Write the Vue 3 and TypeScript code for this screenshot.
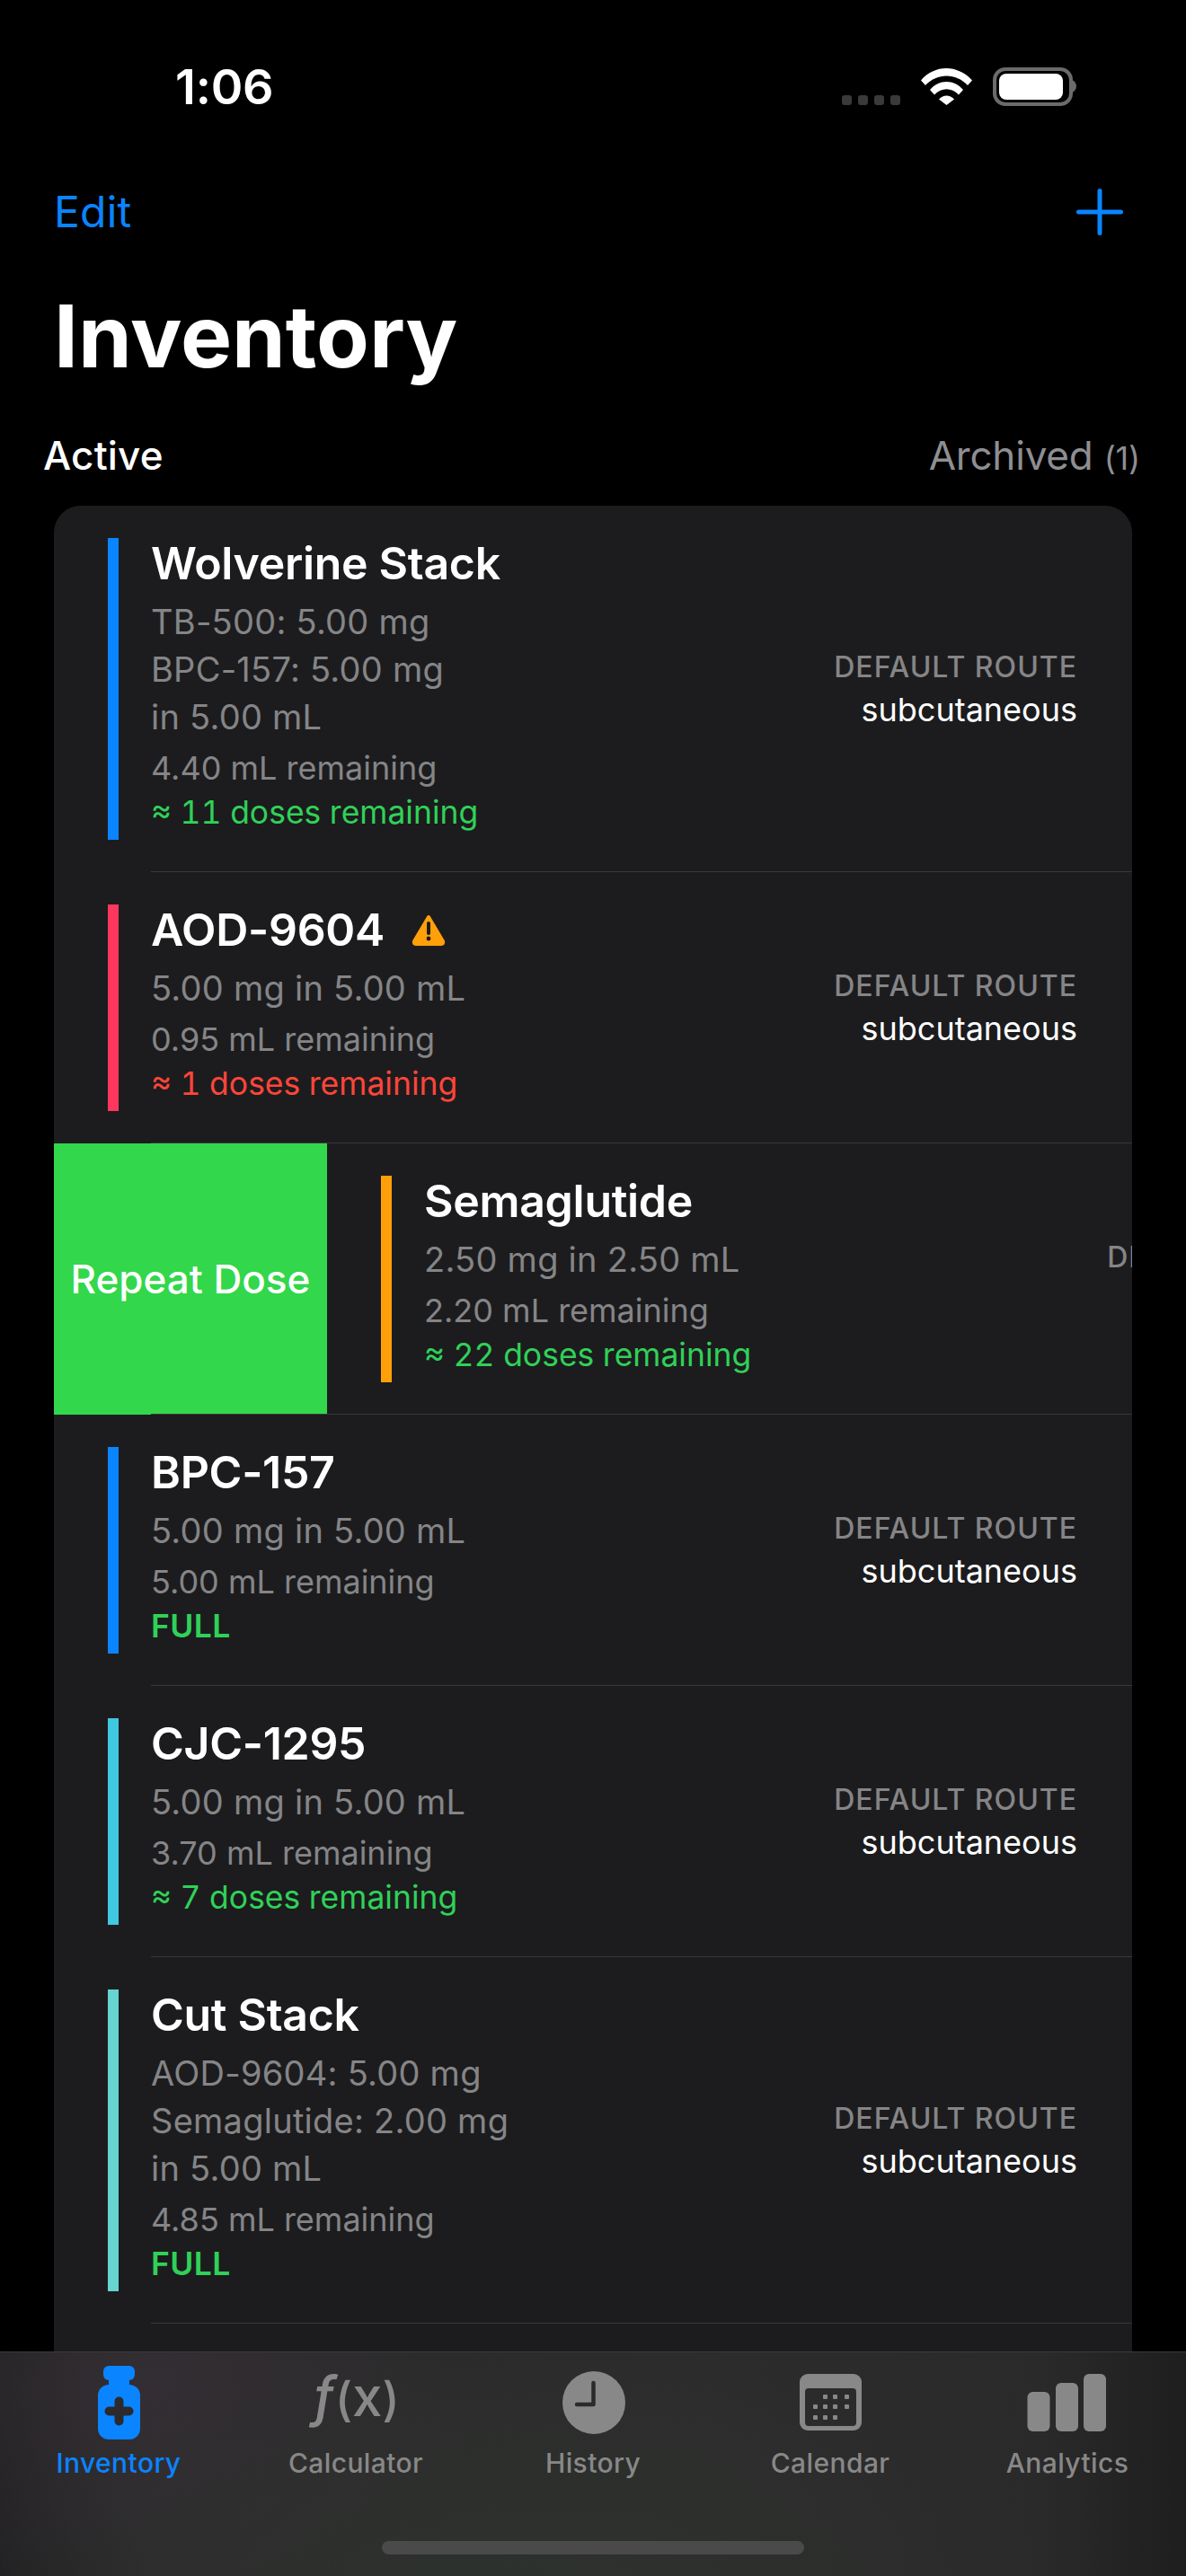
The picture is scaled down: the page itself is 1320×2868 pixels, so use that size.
<script setup lang="ts">
interface Item {
  name: string
  color: string
  lines: string[]
  remaining: string
  status: string
  tone: 'ok' | 'low' | 'full'
  warn?: boolean
  swiped?: boolean
}

const items: Item[] = [
  { name: 'Wolverine Stack', color: '#0a84ff', lines: ['TB-500: 5.00 mg', 'BPC-157: 5.00 mg', 'in 5.00 mL'], remaining: '4.40 mL remaining', status: '≈ 11 doses remaining', tone: 'ok' },
  { name: 'AOD-9604', color: '#ff375f', lines: ['5.00 mg in 5.00 mL'], remaining: '0.95 mL remaining', status: '≈ 1 doses remaining', tone: 'low', warn: true },
  { name: 'Semaglutide', color: '#ff9f0a', lines: ['2.50 mg in 2.50 mL'], remaining: '2.20 mL remaining', status: '≈ 22 doses remaining', tone: 'ok', swiped: true },
  { name: 'BPC-157', color: '#0a84ff', lines: ['5.00 mg in 5.00 mL'], remaining: '5.00 mL remaining', status: 'FULL', tone: 'full' },
  { name: 'CJC-1295', color: '#40c8e0', lines: ['5.00 mg in 5.00 mL'], remaining: '3.70 mL remaining', status: '≈ 7 doses remaining', tone: 'ok' },
  { name: 'Cut Stack', color: '#66d4cf', lines: ['AOD-9604: 5.00 mg', 'Semaglutide: 2.00 mg', 'in 5.00 mL'], remaining: '4.85 mL remaining', status: 'FULL', tone: 'full' },
]
</script>

<template>
  <div class="page">
    <div class="status">
      <span class="time">1:06</span>
      <svg class="status-icons" width="261" height="43" viewBox="0 0 261 43" aria-hidden="true">
        <g fill="#3a3a3c">
          <rect x="0" y="31" width="11" height="11" rx="3" />
          <rect x="18" y="31" width="11" height="11" rx="3" />
          <rect x="36" y="31" width="11" height="11" rx="3" />
          <rect x="54" y="31" width="11" height="11" rx="3" />
        </g>
        <g fill="#fff">
          <path d="M88 14.5 C103 -3.5 129 -3.5 145 14.5 L140 20 C127 6 106 6 93 20 Z" />
          <path d="M98 25 C108 13 125 13 135 25 L130 30.5 C122 22 111 22 103 30.5 Z" />
          <path d="M108 35.5 C113 30 120 30 125 35.5 L116.5 42 Z" />
        </g>
        <rect x="170" y="2" width="85" height="39" rx="12" fill="none" stroke="#6b6b6d" stroke-width="4" />
        <rect x="175" y="7" width="71" height="29" rx="8" fill="#fff" />
        <path d="M256 14 C259 15 261 18 261 21 C261 24 259 27 256 28 Z" fill="#6b6b6d" />
      </svg>
    </div>

    <div class="nav">
      <span class="edit">Edit</span>
      <svg class="plus" width="52" height="52" viewBox="0 0 52 52" aria-hidden="true">
        <path d="M26 2.5V49.5M2.5 26H49.5" stroke="#0a84ff" stroke-width="5" stroke-linecap="round" fill="none" />
      </svg>
    </div>

    <h1 class="title">Inventory</h1>

    <div class="segments">
      <span class="seg-active">Active</span>
      <span class="seg-archived">Archived <small>(1)</small></span>
    </div>

    <div class="card">
      <div v-for="item in items" :key="item.name" class="row">
        <div v-if="item.swiped" class="action">Repeat Dose</div>
        <div class="row-content">
          <div class="left">
            <span class="bar" :style="{ background: item.color }"></span>
            <div class="info">
              <div class="name">
                {{ item.name }}
                <svg v-if="item.warn" class="warn" width="38" height="35" viewBox="0 0 38 35" aria-hidden="true">
                  <path d="M19 3 L35 30 Q36 33 33 33 L5 33 Q2 33 3 30 Z" fill="#ff9f0a" stroke="#ff9f0a" stroke-width="4" stroke-linejoin="round" />
                  <path d="M19 10V21" stroke="#1c1c1e" stroke-width="4" stroke-linecap="round" />
                  <circle cx="19" cy="27" r="2.4" fill="#1c1c1e" />
                </svg>
              </div>
              <div class="lines">
                <div v-for="line in item.lines" :key="line">{{ line }}</div>
              </div>
              <div class="remaining">{{ item.remaining }}</div>
              <div class="state" :class="item.tone">{{ item.status }}</div>
            </div>
          </div>
          <div class="route">
            <div class="route-label">DEFAULT ROUTE</div>
            <div class="route-value">subcutaneous</div>
          </div>
        </div>
      </div>
      <div class="row-more"></div>
    </div>

    <div class="tabbar">
      <div class="tabs">
        <div class="tab active">
          <svg class="tab-icon" width="100" height="90" viewBox="0 0 100 90" aria-hidden="true">
            <rect x="33" y="4" width="35" height="16" rx="6" fill="#0a84ff" />
            <rect x="39" y="18" width="23" height="10" fill="#0a84ff" />
            <rect x="27" y="25" width="47" height="61" rx="12" fill="#0a84ff" />
            <path d="M50.5 43.5V65.5M39.5 54.5H61.5" stroke="#2c2a2c" stroke-width="10" stroke-linecap="round" fill="none" />
          </svg>
          <span class="tab-label">Inventory</span>
        </div>
        <div class="tab">
          <div class="fx"><i class="fx-f">ƒ</i><span class="fx-p">(</span>x<span class="fx-p">)</span></div>
          <span class="tab-label">Calculator</span>
        </div>
        <div class="tab">
          <svg class="tab-icon" width="100" height="90" viewBox="0 0 100 90" aria-hidden="true">
            <circle cx="51" cy="45" r="35" fill="#888" />
            <path d="M50.5 23V47H32" stroke="#2b2b2b" stroke-width="4.5" stroke-linecap="round" stroke-linejoin="round" fill="none" />
          </svg>
          <span class="tab-label">History</span>
        </div>
        <div class="tab">
          <svg class="tab-icon" width="100" height="90" viewBox="0 0 100 90" aria-hidden="true">
            <rect x="16" y="13" width="69" height="63" rx="9" fill="#888" />
            <rect x="22" y="29" width="57" height="42" rx="4" fill="#2b2b2b" />
            <g fill="#888">
              <rect x="42" y="36" width="5" height="5" rx="1" /><rect x="53" y="36" width="5" height="5" rx="1" /><rect x="66" y="36" width="5" height="5" rx="1" />
              <rect x="31" y="47" width="5" height="5" rx="1" /><rect x="42" y="47" width="5" height="5" rx="1" /><rect x="53" y="47" width="5" height="5" rx="1" /><rect x="66" y="47" width="5" height="5" rx="1" />
              <rect x="31" y="59" width="5" height="5" rx="1" /><rect x="42" y="59" width="5" height="5" rx="1" /><rect x="53" y="59" width="5" height="5" rx="1" />
            </g>
          </svg>
          <span class="tab-label">Calendar</span>
        </div>
        <div class="tab">
          <svg class="tab-icon" width="100" height="90" viewBox="0 0 100 90" aria-hidden="true">
            <rect x="5.5" y="33" width="25" height="44" rx="6" fill="#888" />
            <rect x="37" y="23" width="25" height="54" rx="6" fill="#888" />
            <rect x="68" y="13" width="25" height="64" rx="6" fill="#888" />
          </svg>
          <span class="tab-label">Analytics</span>
        </div>
      </div>
      <div class="home"></div>
    </div>
  </div>
</template>

<style>
html, body { margin: 0; background: #000; }
</style>

<style scoped>
.page {
  position: relative;
  width: 1320px;
  height: 2868px;
  overflow: hidden;
  background: #000;
  color: #fff;
  font-family: Inter, "Liberation Sans", sans-serif;
}
.status {
  display: flex;
  justify-content: space-between;
  padding: 67px 122px 0 195px;
  height: 60px;
}
.time {
  font-size: 54px;
  line-height: 60px;
  font-weight: 600;
  letter-spacing: -0.2px;
}
.status-icons { margin-top: 8px; }
.nav {
  display: flex;
  justify-content: space-between;
  align-items: center;
  height: 56px;
  margin-top: 81px;
  padding: 0 70px 0 60px;
}
.edit {
  font-size: 48px;
  line-height: 56px;
  letter-spacing: 0.2px;
  color: #0a84ff;
}
.plus { display: block; }
.title {
  margin: 55px 0 0 60px;
  font-size: 96px;
  line-height: 110px;
  font-weight: 700;
}
.segments {
  display: flex;
  justify-content: space-between;
  align-items: baseline;
  margin-top: 52px;
  padding: 0 51px 0 48px;
  line-height: 52px;
}
.seg-active {
  font-size: 44px;
  font-weight: 500;
  letter-spacing: 0.2px;
}
.seg-archived {
  font-size: 44px;
  letter-spacing: -0.2px;
  color: #8e8e93;
}
.seg-archived small {
  font-size: 36px;
  line-height: 1;
}
.card {
  margin: 30px 60px 0;
  background: #1c1c1e;
  border-radius: 30px;
  overflow: hidden;
}
.row {
  position: relative;
  display: flex;
  overflow: hidden;
}
.row::after {
  content: "";
  position: absolute;
  left: 108px;
  right: 0;
  bottom: 0;
  height: 1px;
  background: #38383a;
}
.action {
  flex: 0 0 304px;
  display: flex;
  align-items: center;
  justify-content: center;
  background: #32d74b;
  font-size: 44px;
  font-weight: 500;
}
.row-content {
  flex: 0 0 1200px;
  box-sizing: border-box;
  display: flex;
  align-items: center;
  justify-content: space-between;
  padding: 36px 61px 36px 60px;
}
.left {
  display: flex;
  gap: 36px;
}
.bar {
  flex: 0 0 12px;
  width: 12px;
}
.info { display: flex; flex-direction: column; }
.name {
  display: flex;
  align-items: center;
  gap: 30px;
  font-size: 50px;
  line-height: 56px;
  font-weight: 600;
  letter-spacing: -0.3px;
}
.lines {
  margin-top: 11px;
  font-size: 38px;
  line-height: 53px;
  letter-spacing: 0.25px;
  color: #858587;
}
.remaining {
  margin-top: 5.5px;
  font-size: 36px;
  line-height: 49.5px;
  color: #858587;
}
.state {
  font-size: 35.5px;
  line-height: 49.5px;
  padding-bottom: 5.5px;
  font-variant-numeric: tabular-nums;
}
.ok { color: #30d158; }
.low { color: #ff453a; }
.full { color: #30d158; font-weight: 600; letter-spacing: 0.4px; }
.route { text-align: right; }
.route-label {
  font-size: 32px;
  line-height: 47px;
  font-weight: 500;
  color: #858587;
  letter-spacing: 1px;
}
.route-value {
  font-size: 36px;
  line-height: 49px;
  font-weight: 400;
}
.row-more { height: 80px; }
.tabbar {
  position: absolute;
  left: 0;
  right: 0;
  bottom: 0;
  height: 250px;
  box-sizing: border-box;
  border-top: 1px solid #3a3a3c;
  background:
    radial-gradient(600px 260px at 560px 260px, rgba(50, 62, 50, 0.35), transparent),
    radial-gradient(360px 300px at 170px 40px, rgba(52, 46, 52, 0.9), transparent),
    linear-gradient(90deg, #1f1f20 0, #2a2a2a 12%, #2c2c2c 60%, #2a2a2a 88%, #1e1e1e 100%);
}
.tabs {
  display: flex;
  padding-top: 11px;
}
.tab {
  flex: 1;
  display: flex;
  flex-direction: column;
  align-items: center;
}
.tab-icon { display: block; }
.fx {
  height: 90px;
  font-size: 60px;
  line-height: 76px;
  font-weight: 500;
  color: #888;
  white-space: nowrap;
}
.fx-f { font-size: 62px; }
.fx-p { font-size: 52px; font-weight: 500; }
.tab-label {
  margin-top: 2px;
  font-size: 30px;
  line-height: 40px;
  font-weight: 500;
  letter-spacing: 0.4px;
  color: #888;
}
.active .tab-label { color: #0a84ff; }
.home {
  position: absolute;
  left: 425px;
  bottom: 24px;
  width: 470px;
  height: 15px;
  border-radius: 8px;
  background: #4a4a4a;
}
</style>
